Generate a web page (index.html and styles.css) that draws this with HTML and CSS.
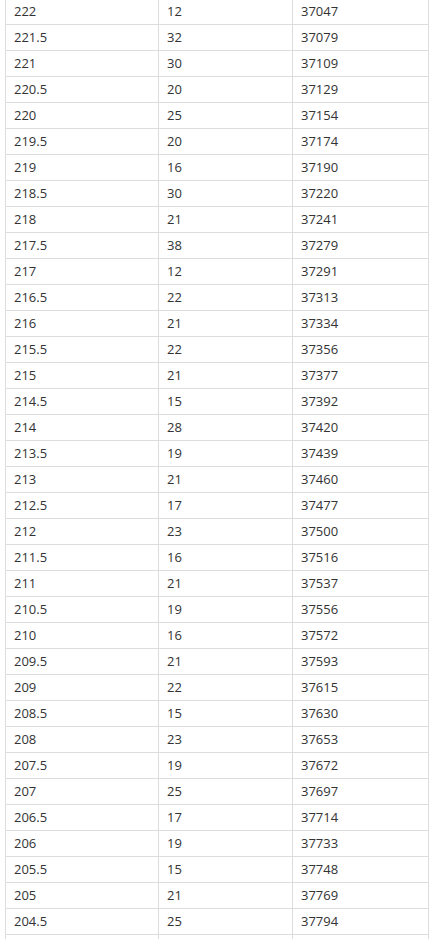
FILE: index.html
```html
<!DOCTYPE html>
<html>
<head>
<meta charset="utf-8">
<link rel="stylesheet" href="styles.css">
</head>
<body>
<div class="wrap">
<table class="grid">
<colgroup><col class="c1"><col class="c2"><col class="c3"></colgroup>
<tbody>
<tr><td>222</td><td>12</td><td>37047</td></tr>
<tr><td>221.5</td><td>32</td><td>37079</td></tr>
<tr><td>221</td><td>30</td><td>37109</td></tr>
<tr><td>220.5</td><td>20</td><td>37129</td></tr>
<tr><td>220</td><td>25</td><td>37154</td></tr>
<tr><td>219.5</td><td>20</td><td>37174</td></tr>
<tr><td>219</td><td>16</td><td>37190</td></tr>
<tr><td>218.5</td><td>30</td><td>37220</td></tr>
<tr><td>218</td><td>21</td><td>37241</td></tr>
<tr><td>217.5</td><td>38</td><td>37279</td></tr>
<tr><td>217</td><td>12</td><td>37291</td></tr>
<tr><td>216.5</td><td>22</td><td>37313</td></tr>
<tr><td>216</td><td>21</td><td>37334</td></tr>
<tr><td>215.5</td><td>22</td><td>37356</td></tr>
<tr><td>215</td><td>21</td><td>37377</td></tr>
<tr><td>214.5</td><td>15</td><td>37392</td></tr>
<tr><td>214</td><td>28</td><td>37420</td></tr>
<tr><td>213.5</td><td>19</td><td>37439</td></tr>
<tr><td>213</td><td>21</td><td>37460</td></tr>
<tr><td>212.5</td><td>17</td><td>37477</td></tr>
<tr><td>212</td><td>23</td><td>37500</td></tr>
<tr><td>211.5</td><td>16</td><td>37516</td></tr>
<tr><td>211</td><td>21</td><td>37537</td></tr>
<tr><td>210.5</td><td>19</td><td>37556</td></tr>
<tr><td>210</td><td>16</td><td>37572</td></tr>
<tr><td>209.5</td><td>21</td><td>37593</td></tr>
<tr><td>209</td><td>22</td><td>37615</td></tr>
<tr><td>208.5</td><td>15</td><td>37630</td></tr>
<tr><td>208</td><td>23</td><td>37653</td></tr>
<tr><td>207.5</td><td>19</td><td>37672</td></tr>
<tr><td>207</td><td>25</td><td>37697</td></tr>
<tr><td>206.5</td><td>17</td><td>37714</td></tr>
<tr><td>206</td><td>19</td><td>37733</td></tr>
<tr><td>205.5</td><td>15</td><td>37748</td></tr>
<tr><td>205</td><td>21</td><td>37769</td></tr>
<tr><td>204.5</td><td>25</td><td>37794</td></tr>
<tr><td></td><td></td><td></td></tr>
</tbody>
</table>
</div>
</body>
</html>
```
FILE: styles.css
```css
html, body {
  margin: 0;
  padding: 0;
  background: #fff;
  overflow: hidden;
}
.wrap {
  padding-left: 5px;
  margin-top: -2px;
}
.grid {
  border-collapse: collapse;
  table-layout: fixed;
  width: 423px;
  font-family: "Open Sans", "Noto Sans", sans-serif;
  font-size: 13px;
  color: #333;
}
.c1 { width: 153px; }
.c2 { width: 134px; }
.c3 { width: 136px; }
.grid td {
  border: 1px solid #ddd;
  height: 25px;
  padding: 0 8px;
  line-height: 25px;
  vertical-align: middle;
  text-align: left;
  white-space: nowrap;
}
```
